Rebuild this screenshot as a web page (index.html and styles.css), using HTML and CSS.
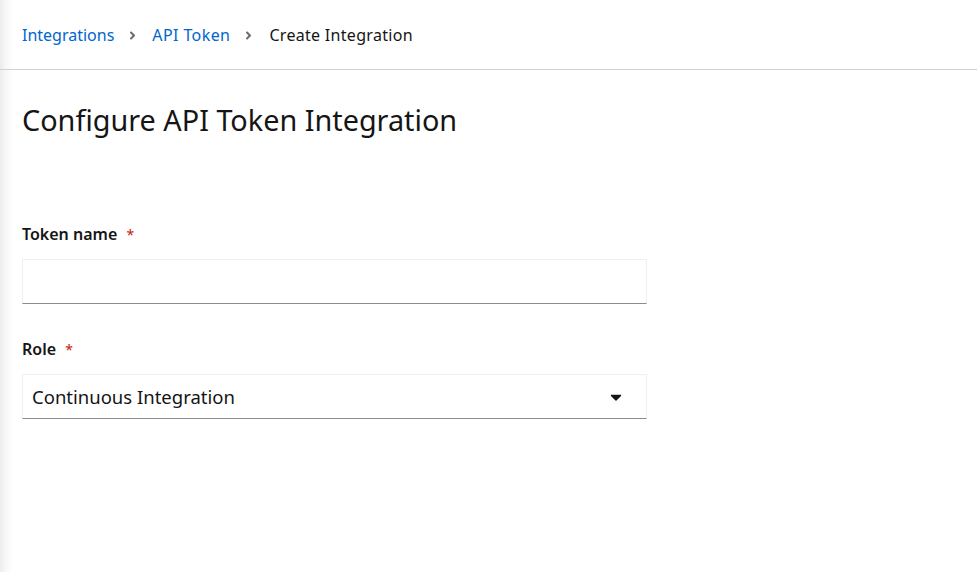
FILE: index.html
```html
<!DOCTYPE html>
<html lang="en">
<head>
<meta charset="utf-8">
<title>Configure API Token Integration</title>
<link rel="stylesheet" href="styles.css">
</head>
<body>
<div class="page">
  <nav class="crumbs">
    <a class="crumb-link" href="#">Integrations</a>
    <svg class="chev" viewBox="0 0 256 512" width="7" height="13" aria-hidden="true"><path d="M224.3 273l-136 136c-9.4 9.4-24.6 9.4-33.9 0l-22.6-22.6c-9.4-9.4-9.4-24.6 0-33.9l96.4-96.4-96.4-96.4c-9.4-9.4-9.4-24.6 0-33.9L54.3 103c9.4-9.4 24.6-9.4 33.9 0l136 136c9.5 9.4 9.5 24.6.1 34z"/></svg>
    <a class="crumb-link crumb-wide" href="#">API Token</a>
    <svg class="chev" viewBox="0 0 256 512" width="7" height="13" aria-hidden="true"><path d="M224.3 273l-136 136c-9.4 9.4-24.6 9.4-33.9 0l-22.6-22.6c-9.4-9.4-9.4-24.6 0-33.9l96.4-96.4-96.4-96.4c-9.4-9.4-9.4-24.6 0-33.9L54.3 103c9.4-9.4 24.6-9.4 33.9 0l136 136c9.5 9.4 9.5 24.6.1 34z"/></svg>
    <span class="crumb-current">Create Integration</span>
  </nav>
  <main class="content">
    <h1 class="title">Configure API Token Integration</h1>
    <form class="form">
      <div class="group">
        <label class="label">Token name <span class="req">*</span></label>
        <div class="control"></div>
      </div>
      <div class="group">
        <label class="label">Role <span class="req">*</span></label>
        <div class="control select">
          <span class="select-text">Continuous Integration</span>
          <svg class="caret" viewBox="0 0 320 512" width="12" height="18" aria-hidden="true"><path d="M31.3 192h257.3c17.8 0 26.7 21.5 14.1 34.1L174.1 354.8c-7.8 7.8-20.5 7.8-28.3 0L17.2 226.1C4.6 213.5 13.5 192 31.3 192z"/></svg>
        </div>
      </div>
    </form>
  </main>
</div>
</body>
</html>
```
FILE: styles.css
```css
html, body {
  margin: 0;
  padding: 0;
  height: 100%;
}
body {
  font-family: "Noto Sans", "Liberation Sans", sans-serif;
  color: #151515;
  background: #fff;
}
.page {
  min-height: 100%;
  background: linear-gradient(to right, #ececec 0, #f6f6f6 5px, #ffffff 13px);
}
.crumbs {
  display: flex;
  align-items: center;
  gap: 15px;
  padding: 23px 22px 22px;
  font-size: 16px;
  line-height: 24px;
  border-bottom: 1px solid #d2d2d2;
}
.crumb-link {
  color: #0066cc;
  text-decoration: none;
}
.crumb-wide {
  letter-spacing: 0.4px;
}
.chev {
  fill: #6a6e73;
  margin-right: 1px;
}
.crumb-current {
  color: #151515;
  margin-left: 1px;
  letter-spacing: 0.3px;
}
.content {
  padding: 32px 22px;
}
.title {
  margin: 0;
  font-size: 28.8px;
  line-height: 36px;
  font-weight: 400;
}
.form {
  margin-top: 84px;
  width: 625px;
  display: flex;
  flex-direction: column;
  gap: 33px;
}
.group {
  display: flex;
  flex-direction: column;
  gap: 12px;
}
.label {
  font-size: 16px;
  line-height: 24px;
  font-weight: 600;
}
.req {
  color: #c9190b;
  margin-left: 5px;
  font-weight: 400;
  font-size: 14px;
}
.control {
  border: 1px solid #f0f0f0;
  border-bottom-color: #8a8d90;
  background: #fff;
  box-sizing: border-box;
  height: 45px;
}
.select {
  display: flex;
  align-items: center;
  justify-content: space-between;
  padding: 0 24px 0 9px;
}
.select-text {
  font-size: 18.5px;
  line-height: 24px;
}
.caret {
  fill: #151515;
}
```
